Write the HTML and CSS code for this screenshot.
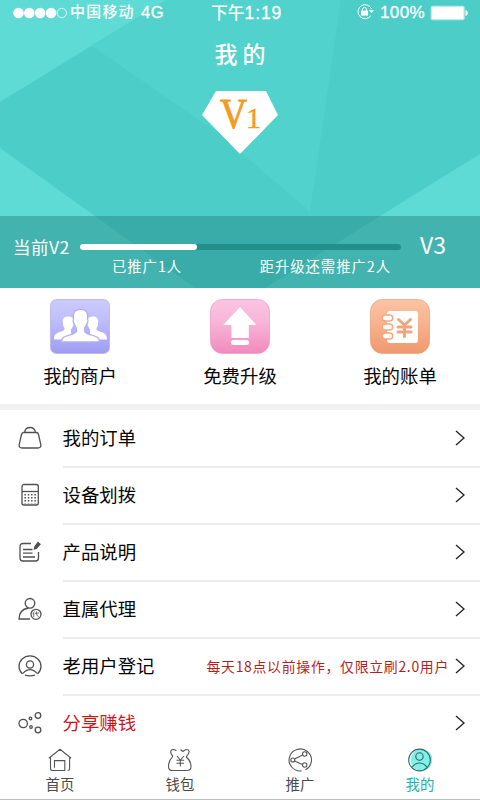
FILE: index.html
```html
<!DOCTYPE html>
<html lang="zh-CN">
<head>
<meta charset="utf-8">
<title>我的</title>
<link rel="stylesheet" href="styles.css">
</head>
<body>
<div class="app">
  <header class="hero">
    <svg class="facets" width="480" height="288" viewBox="0 0 480 288">
      <path fill="#4ccdc8" d="M0 0h480v288H0z"/>
      <path fill="#51d2cc" d="M166 0 92 46l130 90 88 76L341 0z"/>
      <path fill="#5edbd5" d="M0 0h166L0 102zM0 148l95 68 100 72H0zM480 154l-100 62-115 72h215z"/>
    </svg>
    <div class="status">
      <svg class="signal" width="54" height="12" viewBox="0 0 54 12" fill="#fff"><circle cx="5.5" cy="6" r="5.3"/><circle cx="16.3" cy="6" r="5.3"/><circle cx="27.1" cy="6" r="5.3"/><circle cx="38" cy="6" r="5.3"/><circle cx="48.8" cy="6" r="4.7" fill="none" stroke="#fff" stroke-width=".8"/></svg>
      <span class="carrier">中国移动</span><span class="net">4G</span>
      <span class="clock">下午<b>1:19</b></span>
      <svg class="lock" width="19" height="16" viewBox="0 0 19 16" fill="none" stroke="#fff"><path d="M15.600 5.200A7 7 0 1 0 14.800 11.700" stroke-width="1"/><path d="M13 6.300h5l-2.500 3z" fill="#fff" stroke="none"/><path d="M5 6.600h7v5H5z" fill="#fff" stroke="none"/><path d="M6.500 7V5.300a2 2 0 0 1 4 0V7"/></svg>
      <span class="percent">100%</span>
      <svg class="battery" width="39" height="16" viewBox="0 0 39 16"><rect x=".7" y=".7" width="34" height="14.600" rx="2" fill="#b9eeeb"/><rect x="2" y="2" width="31.400" height="12" rx="1" fill="#fff"/><path d="M35.500 5c3 .5 3 5.500 0 6z" fill="#fff"/></svg>
    </div>
    <h1>我的</h1>
    <div class="badge">
      <svg width="76" height="63" viewBox="0 0 76 63"><path d="M14 0h50l12 24-38 39L0 24z" fill="#fff"/></svg>
      <div class="level"><span class="letter">V</span><span class="digit">1</span></div>
    </div>
    <div class="progress">
      <span class="now">当前V2</span>
      <div class="meter">
        <div class="track"><div class="fill"></div></div>
        <div class="notes"><span>已推广1人</span><span>距升级还需推广2人</span></div>
      </div>
      <span class="next">V3</span>
    </div>
  </header>

  <section class="shortcuts">
    <a class="shortcut">
      <svg width="60" height="55" viewBox="0 0 60 55">
        <defs><linearGradient id="violet" x2="0" y2="1"><stop stop-color="#cccbfc"/><stop offset=".35" stop-color="#c0bffa"/><stop offset="1" stop-color="#9f9df2"/></linearGradient></defs>
        <rect x=".5" y=".5" width="59" height="54" rx="6" fill="url(#violet)" stroke="#b5b3ea" stroke-width=".8"/>
        <path fill="#fff" d="M13 24c-1-4 1-6.500 5-6.500s6 2 5.500 6.500c0 3-1.500 5-2.500 6.500V34l3 6.500H4c0-4 1-5.500 4.500-7 4-1.500 6.500-2 6-4.500-1-1-1.500-3-1.500-5z"/>
        <path fill="#fff" transform="translate(61 0) scale(-1 1)" d="M13 24c-1-4 1-6.500 5-6.500s6 2 5.500 6.500c0 3-1.500 5-2.500 6.500V34l3 6.500H4c0-4 1-5.500 4.500-7 4-1.500 6.500-2 6-4.500-1-1-1.500-3-1.500-5z"/>
        <path d="M23.500 20c-1-6 1-9.700 7-9.700s8 3.700 7 9.700c1 1.500.2 4-1 5-.3 2-1 3-2 4.200v3c1 2.300 4 2.800 7 3.800 5 1.500 8 2 8 7h-38c0-5 3-5.500 8-7 3-1 6-1.500 7-3.800v-3c-1-1.200-1.700-2.200-2-4.200-1.200-1-2-3.500-1-5z" fill="#fff" stroke="#b1aff7" stroke-width="1.300"/>
      </svg>
      <span>我的商户</span>
    </a>
    <a class="shortcut">
      <svg width="60" height="55" viewBox="0 0 60 55">
        <defs><linearGradient id="pink" x2="0" y2="1"><stop stop-color="#fac5e2"/><stop offset=".4" stop-color="#f8b6d8"/><stop offset="1" stop-color="#f18abd"/></linearGradient></defs>
        <rect x=".5" y=".5" width="59" height="54" rx="12" fill="url(#pink)" stroke="#ee9fc7" stroke-width=".8"/>
        <path d="M30 8 46.500 26h-7.700v13H21.500V26h-8.300z" fill="#fff"/><rect x="21" y="41" width="18" height="5" rx="2.500" fill="#fff"/>
      </svg>
      <span>免费升级</span>
    </a>
    <a class="shortcut">
      <svg width="60" height="55" viewBox="0 0 60 55">
        <defs><linearGradient id="orange" x2="0" y2="1"><stop stop-color="#fcc4a5"/><stop offset=".35" stop-color="#f9b693"/><stop offset="1" stop-color="#ef986e"/></linearGradient></defs>
        <rect x=".5" y=".5" width="59" height="54" rx="12" fill="url(#orange)" stroke="#e9a481" stroke-width=".8"/>
        <rect x="17" y="12" width="31" height="32" rx="3" fill="#fff"/>
        <g fill="#fff" stroke="#f5a881" stroke-width="1.500"><rect x="12.200" y="16" width="10.500" height="6" rx="3"/><rect x="12.200" y="25" width="10.500" height="6" rx="3"/><rect x="12.200" y="34" width="10.500" height="6" rx="3"/></g>
        <path d="m28.500 20.500 6 5.500 6-5.500M34.500 26v11.500M28 28h13M28 33h13" fill="none" stroke="#f3a47d" stroke-width="3" stroke-linecap="round"/>
      </svg>
      <span>我的账单</span>
    </a>
  </section>

  <main class="list">
    <a class="row"><svg class="ico" viewBox="0 0 24 24"><path d="M5.500 6.500h13q1.500 0 2 2l2.300 10q.5 3.500-3 3.500H4.200q-3.500 0-3-3.500l2.300-10q.5-2 2-2zM6.500 6.500C7 3 9.500 1.500 12 1.500S17 3 17.500 6.500"/></svg><span class="name">我的订单</span><svg class="go" viewBox="0 0 10 16"><path d="m1 1 8 7-8 7"/></svg></a>
    <a class="row"><svg class="ico" viewBox="0 0 24 24"><rect x="4" y="1.500" width="16.300" height="20.500" rx="2"/><path d="M4 8.500h16.300"/><path stroke-width="1.500" stroke-dasharray="1.500 1.500" d="M7.200 11v9.500M10.500 11v9.500M13.800 11v9.500M17.100 11v9.500"/></svg><span class="name">设备划拨</span><svg class="go" viewBox="0 0 10 16"><path d="m1 1 8 7-8 7"/></svg></a>
    <a class="row"><svg class="ico" viewBox="0 0 24 24"><path d="M13 3.500H5Q2 3.500 2 6.500V18q0 3 3 3h12.500q3 0 3-3v-6M5 9.500h9.500M5 13.200h9.500M5 17h12"/><path d="m20 2.500 2 1.800-3.500 4-2 .7.500-2.500z" fill="#505050"/></svg><span class="name">产品说明</span><svg class="go" viewBox="0 0 10 16"><path d="m1 1 8 7-8 7"/></svg></a>
    <a class="row"><svg class="ico" viewBox="0 0 24 24"><circle cx="12" cy="6.300" r="4.800"/><path d="M12 22H1c0-6 3.500-10 9.500-11"/><circle cx="18" cy="17.300" r="5"/><path stroke-width=".8" d="m16.400 14.500-1.600 2.700M15.700 16v4M17 16.500l4-.6M18.400 14.300c0 3 .5 4.700 2.400 5.700"/></svg><span class="name">直属代理</span><svg class="go" viewBox="0 0 10 16"><path d="m1 1 8 7-8 7"/></svg></a>
    <a class="row"><svg class="ico" viewBox="0 0 24 24"><path d="M4.500 20A11 10.500 0 1 1 19.500 20M5 19.300c4-5 10-5 14 0M7 21.200q5 1.500 10 0"/><circle cx="12" cy="10.500" r="3.600"/></svg><span class="name">老用户登记</span><span class="hint">每天18点以前操作，仅限立刷2.0用户</span><svg class="go" viewBox="0 0 10 16"><path d="m1 1 8 7-8 7"/></svg></a>
    <a class="row hot"><svg class="ico" viewBox="0 0 24 24"><circle cx="5.200" cy="12.500" r="4.200"/><circle cx="20" cy="4.500" r="2.800"/><circle cx="20" cy="19" r="2.800"/><circle cx="12.500" cy="7.500" r="1.300"/><circle cx="13" cy="16" r="1.300"/></svg><span class="name">分享赚钱</span><svg class="go" viewBox="0 0 10 16"><path d="m1 1 8 7-8 7"/></svg></a>
  </main>

  <nav class="tabs">
    <a class="tab"><svg viewBox="0 0 24 24"><path d="M.8 10.200 12 1.300l11.200 8.900M2.500 9v11.500q0 2 2 2h12.300V12.600H6.500v7.200M21.600 9v12q0 1.500-2 1.500"/></svg><span>首页</span></a>
    <a class="tab"><svg viewBox="0 0 24 24"><path d="M5 8.200C2.500 6 2 3 4 1.800c2-1 3 .5 4.500.7M12.500 1.500l2.500 2 2-1.500q3-1.300 4 1c.5 2-1 4-3 6M5 8.200c-2.500 2.500-4.500 6-4.500 10.300q0 4 4 4h14.500q4 0 4-4c0-4-2-7.500-5-9.500M9 8l3.300 4L16 8M12.300 12v6.500M8.500 12.200H16M8.500 15.200H16"/></svg><span>钱包</span></a>
    <a class="tab"><svg viewBox="0 0 24 24"><path d="M13.500 22.900A11.200 11 0 1 1 17.500 21.700M6.500 11l8-4M6.500 13l8 3.500"/><circle cx="4.800" cy="12" r="2"/><circle cx="16.700" cy="6" r="2.200"/><circle cx="16.700" cy="17" r="2.200"/></svg><span>推广</span></a>
    <a class="tab active"><svg viewBox="0 0 24 24"><circle cx="13.500" cy="12" r="10.800" fill="#82f0e6" stroke="none"/><ellipse cx="11.500" cy="12" rx="10.800" ry="10.900"/><circle cx="11.500" cy="8.500" r="3.700"/><path d="M4 19.500c3.500-6 11.500-6 15 0"/></svg><span>我的</span></a>
  </nav>
</div>
</body>
</html>
```
FILE: styles.css
```css
* { box-sizing: border-box; }
body {
  margin: 0;
  background: #fff;
  color: #050505;
  font-family: "Noto Sans CJK SC", sans-serif;
}
.app {
  width: 480px;
  height: 800px;
  overflow: hidden;
  display: flex;
  flex-direction: column;
}
svg { display: block; flex: none; }

.hero {
  position: relative;
  height: 288px;
  flex: none;
  display: flex;
  flex-direction: column;
  align-items: center;
  color: #fff;
}
.facets { position: absolute; inset: 0; }
.status, .hero h1, .badge, .progress { position: relative; }

.status {
  width: 480px;
  height: 26px;
  padding-left: 13px;
  display: flex;
  align-items: center;
  line-height: 22px;
  white-space: nowrap;
  font-weight: 500;
}
.carrier { width: 71px; margin-left: 3px; font-size: 15px; letter-spacing: 1.2px; margin-top: -4px; }
.net, .percent, .clock b { font-family: "Liberation Sans", sans-serif; font-weight: 400; -webkit-text-stroke: .3px #fff; }
.net { width: 70px; font-size: 16.5px; letter-spacing: .6px; margin-top: -3px; }
.clock { width: 145px; font-size: 16.8px; margin-top: -2px; }
.clock b { font-size: 17.5px; letter-spacing: .9px; }
.lock { margin-top: -2px; }
.percent { width: 50px; margin-left: 5px; font-size: 17px; letter-spacing: .4px; }

.hero h1 {
  margin: 11px 0 0;
  height: 32px;
  line-height: 32px;
  font-size: 23px;
  font-weight: 500;
  letter-spacing: 5px;
  padding-left: 5px;
}
.badge { height: 63px; margin-top: 22px; }
.level {
  position: absolute;
  left: 18px;
  top: -1px;
  display: flex;
  align-items: baseline;
  color: #f59a23;
  font: 43px/48px "Liberation Serif", serif;
  -webkit-text-stroke: .9px #f59a23;
}
.letter { width: 27px; transform: scaleX(.87); transform-origin: left; }
.digit { font-size: 30px; line-height: 30px; margin-left: -1px; -webkit-text-stroke-width: .4px; }

.progress {
  width: 480px;
  height: 72px;
  margin-top: auto;
  padding: 0 13px;
  display: flex;
  background: rgba(30, 125, 125, .42);
}
.now { width: 67px; font-size: 17.6px; letter-spacing: .4px; line-height: 62px; white-space: nowrap; }
.meter { width: 321px; padding-top: 27.5px; }
.track { height: 6px; border-radius: 3px; background: #238f8b; }
.fill { width: 117px; height: 6px; border-radius: 3px; background: #fff; }
.notes { display: flex; justify-content: space-between; padding: 5px 10px 0 32px; font-size: 14.3px; line-height: 22px; letter-spacing: 1px; white-space: nowrap; }
.next { margin-left: 19px; font-size: 23px; line-height: 57px; }

.shortcuts {
  height: 122px;
  flex: none;
  display: grid;
  grid-template-columns: repeat(3, 1fr);
  border-bottom: 6px solid #f1f1f1;
}
.shortcut {
  padding-top: 10.5px;
  display: flex;
  flex-direction: column;
  align-items: center;
  font-size: 18.4px;
  line-height: 26px;
}
.shortcut span { margin-top: 8.5px; }

.list { height: 328px; flex: none; overflow: hidden; }
.row {
  height: 57px;
  padding: 0 15px 1px 17.5px;
  display: flex;
  align-items: center;
  position: relative;
}
.row + .row::before {
  content: "";
  position: absolute;
  left: 63px;
  right: 0;
  top: -1px;
  height: 2px;
  background: #ececec;
}
.ico { width: 24px; height: 24px; margin-top: -1px; fill: none; stroke: #505050; stroke-width: 1.3; }
.name { margin-left: 21px; margin-top: -2px; font-size: 18.4px; line-height: 26px; }
.go { width: 10px; height: 16px; margin-left: auto; fill: none; stroke: #222; stroke-width: 1.3; }
.hint { margin-left: auto; margin-right: 6px; margin-top: -1px; color: #b51f1f; font-size: 13.9px; letter-spacing: .7px; white-space: nowrap; }
.hint + .go { margin-left: 0; }
.hot .name { color: #c9161b; }

.tabs {
  height: 62px;
  flex: none;
  display: grid;
  grid-template-columns: repeat(4, 1fr);
  background: #fff;
  border-bottom: 1px solid #bdbdbd;
}
.tab {
  padding-top: 10px;
  display: flex;
  flex-direction: column;
  align-items: center;
  font-size: 14.4px;
  line-height: 20px;
  color: #4b4b4b;
}
.tab svg { width: 24px; height: 24px; fill: none; stroke: #555; stroke-width: 1.1; }
.tab span { margin-top: 2px; }
.active { color: #22b3ab; }
.active svg { stroke: #2b6b6b; }
```
